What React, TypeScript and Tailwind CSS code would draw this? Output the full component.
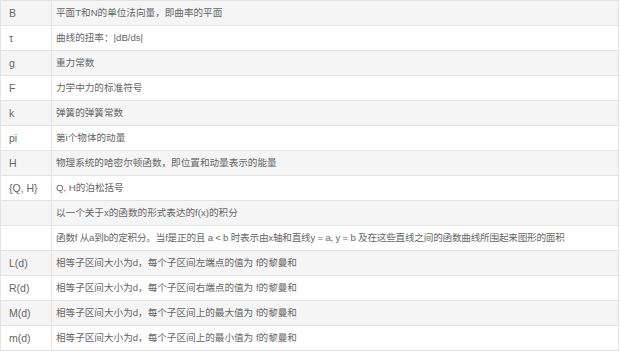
const rows: [string, string][] = [
  ['B', '平面T和N的单位法向量，即曲率的平面'],
  ['τ', '曲线的扭率：|dB/ds|'],
  ['g', '重力常数'],
  ['F', '力学中力的标准符号'],
  ['k', '弹簧的弹簧常数'],
  ['pi', '第i个物体的动量'],
  ['H', '物理系统的哈密尔顿函数，即位置和动量表示的能量'],
  ['{Q, H}', 'Q, H的泊松括号'],
  ['', '以一个关于x的函数的形式表达的f(x)的积分'],
  ['', '函数f 从a到b的定积分。当f是正的且 a < b 时表示由x轴和直线y = a, y = b 及在这些直线之间的函数曲线所围起来图形的面积'],
  ['L(d)', '相等子区间大小为d，每个子区间左端点的值为 f的黎曼和'],
  ['R(d)', '相等子区间大小为d，每个子区间右端点的值为 f的黎曼和'],
  ['M(d)', '相等子区间大小为d，每个子区间上的最大值为 f的黎曼和'],
  ['m(d)', '相等子区间大小为d，每个子区间上的最小值为 f的黎曼和'],
]

export default function App() {
  return (
    <div className="h-[354px] w-[620px] bg-white font-['Liberation_Sans','Noto_Sans_CJK_SC',sans-serif] text-[9.6px] text-[#666]">
      <table className="w-[619px] table-fixed border-collapse">
        <colgroup>
          <col className="w-[51px]" />
          <col />
        </colgroup>
        <tbody>
          {rows.map(([sym, desc], i) => (
            <tr key={i} className={i % 2 === 0 ? 'h-[25px] bg-[#f5f5f5]' : 'h-[25px] bg-white'}>
              <td className="whitespace-nowrap border border-[#e3e3e3] pl-2 text-[10.5px] leading-none">{sym}</td>
              <td
                className={
                  desc.length > 60
                    ? 'whitespace-nowrap border border-[#e3e3e3] pl-[4px] leading-none tracking-[-0.2px]'
                    : 'whitespace-nowrap border border-[#e3e3e3] pl-[4px] leading-none'
                }
              >
                {desc}
              </td>
            </tr>
          ))}
        </tbody>
      </table>
    </div>
  )
}
